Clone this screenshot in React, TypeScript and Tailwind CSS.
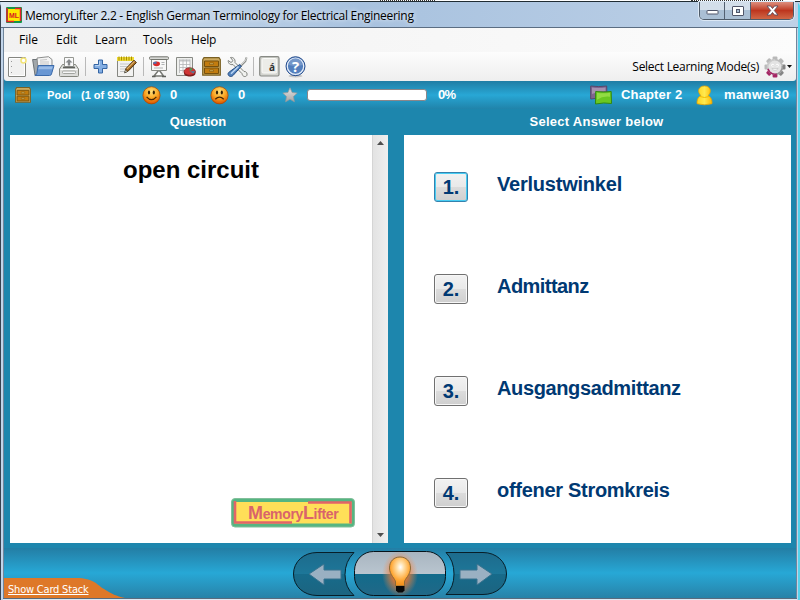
import React from "react";

const UI = "font-['Open_Sans','Noto_Sans',sans-serif]";
const ARIAL = "font-['Liberation_Sans',Arial,sans-serif]";

function Logo() {
  return (
    <svg width="16" height="16" viewBox="0 0 16 16">
      <rect width="16" height="16" rx="1" fill="#159447" />
      <path d="M2 2h12v12H2z" fill="#ffe800" />
      <path d="M1 1v13.500H8M9 1.500h5.500V14" fill="none" stroke="#e5202c" strokeWidth="1.500" />
      <text x="3" y="10.500" fontSize="7.500" fontWeight="bold" textLength="10" lengthAdjust="spacingAndGlyphs" fill="#d71920" fontFamily="Liberation Sans, sans-serif">ML</text>
    </svg>
  );
}

function NewIcon() {
  return (
    <svg width="20" height="22" viewBox="0 0 20 22">
      <rect x="1.500" y="1.500" width="17" height="19" rx=".5" fill="#f1f1f0" stroke="#858681" />
      <path d="M2.500 2.500h15v17h-15z" fill="none" stroke="#fff" />
      <path d="M4.500 5v1M4.500 10v1M4.500 16v1" stroke="#999" />
      <circle cx="16.500" cy="4.500" r="2.500" fill="#fff" stroke="#f3e477" strokeWidth="1.600" />
    </svg>
  );
}

function FolderIcon() {
  return (
    <svg width="23" height="22" viewBox="0 0 23 22">
      <path d="M.6 3.500h5.500l1 1.500h11v12L3 19z" fill="#a1a7ab" stroke="#6d7377" />
      <path d="M5 2l11.500-1.300L20 3.500V14H6z" fill="#f4f4f4" stroke="#8b8d8c" />
      <path d="M8 4.200l7-.7M8 6h9M8 8h9" stroke="#c6c6c6" />
      <path d="M6.200 9.500H22L19.500 18q-.4 1.500-2 1.500H2.800q1.700-.4 2-2z" fill="#6997d3" stroke="#3c6bab" />
      <path d="M7 10.500h13.800l-.8 2.800H6.200z" fill="#9abce7" />
    </svg>
  );
}

function PrinterIcon() {
  return (
    <svg width="22" height="22" viewBox="0 0 22 22">
      <path d="M4.500 8.500h13l3 4.500v6.500q0 1-1 1h-17q-1 0-1-1V13z" fill="#dcddda" stroke="#85877f" />
      <path d="M2.500 13.500h17" stroke="#fff" />
      <path d="M6.500 1.500h9v9h-9z" fill="#fafafa" stroke="#969893" />
      <path d="M11 3l3.500 3.500h-2.300v3H9.800v-3H7.500z" fill="#85888a" />
      <path d="M5 11.500h12" stroke="#5f615d" strokeWidth="1.600" />
      <rect x="4.500" y="15" width="13" height="2.500" rx="1" fill="#f6f6f6" stroke="#a3a5a0" />
    </svg>
  );
}

function PlusIcon() {
  return (
    <svg width="15" height="15" viewBox="0 0 15 15">
      <path d="M5.500 1h4v4.500H14v4H9.500V14h-4V9.500H1v-4h4.500z" fill="#83aee3" stroke="#3465a4" />
      <path d="M6.500 2.200v4.300H2.200" fill="none" stroke="#b6d2f1" />
    </svg>
  );
}

function NotepadIcon() {
  return (
    <svg width="22" height="22" viewBox="0 0 22 22">
      <path d="M1.500 3.500h16v17h-16z" fill="#f2f2f1" stroke="#858681" />
      <path d="M4 8h11M4 10.500h11M4 13h9M4 15.500h6" stroke="#c6c8ca" />
      <path d="M1 3h17" stroke="#eedb35" strokeWidth="4" />
      <path d="M3 .5v4M5.500.5v4M8 .5v4M10.500.5v4M13 .5v4M15.500.5v4" stroke="#aa8e00" />
      <path d="M9 16.500l1-4 8-8.300 2.400 2.400-8 8.300z" fill="#a4681e" stroke="#4b3312" />
      <path d="M11 12.800l7.500-7.500" stroke="#e4b369" strokeWidth="1.200" />
      <path d="M8.500 17l1-3.500 2 2z" fill="#eadcb8" stroke="#333" strokeWidth=".6" />
    </svg>
  );
}

function PresentationIcon() {
  return (
    <svg width="21" height="22" viewBox="0 0 21 22">
      <path d="M9.500 14.500L5 20h9.500L10.500 14.500" fill="#fff" stroke="#777974" strokeWidth="1.500" />
      <path d="M3 20.500h3.500M13 20.500h4" stroke="#5d5f5b" strokeWidth="1.500" />
      <path d="M2.500 3h15v11.500h-15z" fill="#f8f8f7" stroke="#888a85" />
      <rect x=".5" y=".8" width="19" height="2.700" rx="1" fill="#d7d8d5" stroke="#74766f" />
      <ellipse cx="7.500" cy="7.800" rx="3.500" ry="2.400" fill="#d92929" />
      <path d="M7.500 7.800V5.400A3.500 2.400 0 004 7.800z" fill="#4a75b4" />
      <path d="M12.500 6.500h3M12.500 8.500h3M5 12h9" stroke="#b1b3b4" />
    </svg>
  );
}

function TableIcon() {
  return (
    <svg width="21" height="22" viewBox="0 0 21 22">
      <path d="M1.500 1.500h16v18h-16z" fill="#eeefed" stroke="#888a85" />
      <path d="M4.500 4h10.500v13H4.500z" fill="#fafafa" />
      <path d="M4.500 3.500H15v2H4.500z" fill="#c3c5c6" />
      <path d="M4.500 8.500H15M4.500 11.500H15M4.500 14.500H15M4.500 3.500v13.500M8 3.500v13.500M11.500 3.500v13.500M15 3.500v13.500" stroke="#b2b4b5" strokeWidth=".8" />
      <path d="M9 15.500v1.700c0 4.300 11.500 4.300 11.500 0v-1.700" fill="#791b1b" />
      <ellipse cx="14.700" cy="15.500" rx="5.700" ry="3.700" fill="#cf3535" stroke="#871f1f" strokeWidth=".7" />
      <path d="M14.700 15.500v-3.400l3.500.7z" fill="#4b9b55" />
      <path d="M14.700 15.500l5.300-.5-1.500 2.500z" fill="#527c9d" />
    </svg>
  );
}

function DrawerIcon({ size = 19 }: { size?: number }) {
  return (
    <svg width={size} height={size} viewBox="0 0 19 19">
      <path d="M2 .7h15l1.300 2v15.500H.7V2.700z" fill="#cdaa5f" stroke="#796023" strokeWidth="1.200" />
      <path d="M2.500 4h14v5.500h-14zM2.500 11h14v5.500h-14z" fill="#c27c0f" stroke="#76510d" />
      <path d="M7.500 6h4v1.300h-4zM7.500 13h4v1.300h-4z" fill="#e8c567" stroke="#765010" strokeWidth=".6" />
    </svg>
  );
}

function ToolsIcon() {
  return (
    <svg width="21" height="22" viewBox="0 0 21 22">
      <path d="M3.500 1.500c2.500-.5 5 1.300 4.500 5L17 15.500c2.300-.3 3.800 2 2.800 4-1 1.800-4.500 1.300-4.700-1.800L6 8.500c-2.700.7-5-1-4.800-4L4 6.500l2-1.800z" fill="#f1f2f0" stroke="#80827d" />
      <path d="M19.500 1.500l-1.200 3.700-5 5" fill="none" stroke="#8d8f8b" strokeWidth="2" />
      <path d="M19.500 2l-1.500 3-4.500 4.500" fill="none" stroke="#e5e5e3" strokeWidth=".8" />
      <path d="M12.700 8.500l1.700 1.700-8.300 9.200c-1.600 1.800-4.500 1.200-5-.9-.3-1.100.4-2 1.500-2.800z" fill="#5282bd" stroke="#244c82" />
      <path d="M11.500 10.500L4 17.700" stroke="#bdd7f4" strokeWidth="1.500" />
    </svg>
  );
}

function AccentIcon() {
  return (
    <svg width="21" height="21" viewBox="0 0 21 21">
      <rect x=".7" y=".7" width="19.300" height="19.300" rx="1.500" fill="#d3d4cf" stroke="#888a85" strokeWidth="1.200" />
      <rect x="3" y="2.500" width="14.700" height="14.500" rx="1.200" fill="#ecece8" stroke="#fafaf8" />
      <text x="10" y="14.500" fontSize="10" fontWeight="bold" fill="#333" fontFamily="Open Sans, sans-serif">á</text>
    </svg>
  );
}

function HelpIcon() {
  return (
    <svg width="21" height="22" viewBox="0 0 21 22">
      <ellipse cx="10.500" cy="20" rx="7" ry="1.500" fill="#aaa" opacity=".6" />
      <circle cx="10.500" cy="10.200" r="9.500" fill="#537fbd" stroke="#294f8e" strokeWidth="1" />
      <circle cx="10.500" cy="10.200" r="8.200" fill="none" stroke="#e9f0fa" strokeWidth="1.200" />
      <path d="M3.700 9a6.800 6.800 0 0113.600 0q-6 2-13.600 0" fill="#91acd3" opacity=".55" />
      <text x="10.500" y="15.700" textAnchor="middle" fontSize="15" fontWeight="bold" fill="#fff" fontFamily="Open Sans, sans-serif">?</text>
    </svg>
  );
}

function GearIcon() {
  return (
    <svg width="22" height="22" viewBox="-11 -11 22 22">
      {[0, 45, 90, 135, 180, 225, 270, 315].map((a) => (
        <rect key={a} x="-2.400" y="-10.500" width="4.800" height="6" rx="1" transform={`rotate(${a})`}
          fill={a === 180 || a === 225 ? "#a52765" : a === 90 || a === 135 ? "#858585" : "#b9b9b9"} />
      ))}
      <circle r="8" fill="#bcbcbc" />
      <path d="M-8 0A8 8 0 002 7.700V0z" fill="#a52765" />
      <path d="M2 7.700A8 8 0 008-1H0z" fill="#9a9a9a" />
      <path d="M-8 2A8 8 0 010-8V0z" fill="#cacaca" />
      <circle r="6.500" fill="#e3e3e3" />
      <circle cx="-2.300" cy="-1.800" r="1.400" fill="#fff" />
      <circle cx="2.300" cy="-1.800" r="1.400" fill="#fff" />
      <circle cx="-2" cy="-1.700" r=".5" fill="#aaa" />
      <circle cx="2" cy="-1.700" r=".5" fill="#aaa" />
      <path d="M-3.200 1.500Q0 5 3.200 1.500z" fill="#fff" stroke="#b5b5b5" strokeWidth=".5" />
    </svg>
  );
}

function Face({ sad = false }: { sad?: boolean }) {
  return (
    <svg width="19" height="19" viewBox="0 0 19 19">
      <defs>
        <radialGradient id="faceFill" cx=".5" cy=".28" r=".7">
          <stop offset="0" stopColor="#ffe07a" /><stop offset=".55" stopColor="#fba622" /><stop offset="1" stopColor="#db5600" />
        </radialGradient>
      </defs>
      <circle cx="9.500" cy="9.300" r="8.600" fill="url(#faceFill)" stroke="#a84900" strokeWidth=".7" />
      <ellipse cx="7" cy="6.500" rx="1.100" ry="2.100" fill="#342005" />
      <ellipse cx="11.800" cy="6.500" rx="1.100" ry="2.100" fill="#342005" />
      <path d={sad ? "M5.300 13.300Q9.500 9 13.700 13.300" : "M4.600 10.800Q9.500 16.500 14.400 10.800"} fill="none" stroke="#4c2703" strokeWidth="1.300" />
    </svg>
  );
}

function StarIcon() {
  return (
    <svg width="16" height="16" viewBox="0 0 16 16">
      <defs><linearGradient id="starFill" x2="0" y2="1"><stop stopColor="#e5e5e5" /><stop offset="1" stopColor="#a5a5a5" /></linearGradient></defs>
      <path d="M8 .8l2.100 4.700 5.100.6-3.800 3.500 1 5.200L8 12.200l-4.400 2.600 1-5.200L.8 6.100l5.100-.6z" fill="url(#starFill)" stroke="#999" strokeWidth=".7" />
    </svg>
  );
}

function CardsIcon() {
  return (
    <svg width="22" height="20" viewBox="0 0 22 20">
      <path d="M.7 1q8 1.200 16 0l.3 12.500Q9 12.300.7 14z" fill="#806590" stroke="#5b4669" />
      <path d="M2 2.500q6.500 1 13.500 0v3.500q-5-.5-13.500 3z" fill="#a591b0" />
      <path d="M5.700 6.500q7.500 1 15.500 0l.3 12Q14 17.200 5.500 19z" fill="#6ac821" stroke="#318812" />
      <path d="M7 7.800q6 1 13 0v4q-7-1-13 3z" fill="#92dc43" />
    </svg>
  );
}

function UserIcon() {
  return (
    <svg width="17" height="21" viewBox="0 0 17 21">
      <defs><linearGradient id="userFill"><stop stopColor="#ffd51c" /><stop offset=".5" stopColor="#ffe94f" /><stop offset="1" stopColor="#ffb900" /></linearGradient></defs>
      <path d="M4.800 10.500C.8 6.500 2.500 1 8.500 1s7.700 5.500 3.700 9.500c3 1.800 4 4.600 3.800 8.200Q8.500 21 1 18.700c-.2-3.600.8-6.400 3.800-8.200z" fill="url(#userFill)" stroke="#e8a300" strokeWidth=".8" />
      <path d="M4 11.500q4.500 2 9 0" fill="none" stroke="#f2ba00" />
    </svg>
  );
}

function WindowButtons() {
  return (
    <div className="flex h-[18px] w-[95px] overflow-hidden rounded-b-[5px] border border-t-0 border-[#4e5b69] bg-[#b9cadc] shadow-[0_0_0_1px_#dce8f5]">
      <div className="flex w-[25px] items-center justify-center border-r border-[#536071] bg-linear-to-b from-[#d3deea] from-50% to-[#aabfd4] to-50%">
        <svg width="13" height="9"><rect x="1" y="4.500" width="11" height="3.500" rx=".5" fill="#fff" stroke="#50566a" /></svg>
      </div>
      <div className="flex w-[26px] items-center justify-center border-r border-[#536071] bg-linear-to-b from-[#d3deea] from-50% to-[#aabfd4] to-50%">
        <svg width="12" height="10"><rect x=".5" y=".5" width="11" height="9" rx=".5" fill="#fff" stroke="#50566a" /><rect x="4.500" y="3.500" width="3" height="3" fill="#a8bed4" stroke="#50566a" /></svg>
      </div>
      <div className="flex flex-1 items-center justify-center bg-linear-to-b from-[#dc8e7e] via-[#bd351e] via-50% to-[#d06645]">
        <svg width="13" height="11" viewBox="0 0 13 11"><path d="M1 1h3.500l2 2.500 2-2.500H12L8.300 5.500 12 10H8.500l-2-2.500-2 2.500H1l3.700-4.500z" fill="#fff" stroke="#5a4b5a" strokeWidth=".9" /></svg>
      </div>
    </div>
  );
}

function TitleBar() {
  return (
    <header className="flex h-[26px] shrink-0 items-start border-b border-[#5b6d82] bg-linear-to-r from-[#dbe7f3] via-[#a8c2df] via-45% to-[#bed1e7]">
      <div className="mt-[5px] ml-[5px]"><Logo /></div>
      <h1 className={`${UI} mt-[5px] ml-[3px] h-[18px] w-[394px] text-[12px] leading-[18px] tracking-[-0.28px] whitespace-nowrap text-black [text-shadow:0_0_5px_#fff]`}>
        MemoryLifter 2.2 - English German Terminology for Electrical Engineering
      </h1>
      <div className="mr-[4px] ml-auto"><WindowButtons /></div>
    </header>
  );
}

const Sep = ({ className }: { className: string }) => <div className={`${className} h-[19px] w-px bg-[#b9b9b9]`} />;

function Toolbar() {
  return (
    <div className="flex h-[29px] shrink-0 items-center rounded-b-[3px] bg-linear-to-b from-[#fdfdfd] to-[#eeeeee]">
      <div className="ml-[3px]"><NewIcon /></div>
      <div className="ml-[5px]"><FolderIcon /></div>
      <div className="ml-[3px]"><PrinterIcon /></div>
      <Sep className="ml-[5px]" />
      <div className="ml-[7px]"><PlusIcon /></div>
      <div className="ml-[8px]"><NotepadIcon /></div>
      <Sep className="ml-[5px]" />
      <div className="ml-[5px]"><PresentationIcon /></div>
      <div className="ml-[5px]"><TableIcon /></div>
      <div className="ml-[6px]"><DrawerIcon /></div>
      <div className="ml-[6px]"><ToolsIcon /></div>
      <Sep className="ml-[5px]" />
      <div className="ml-[5px]"><AccentIcon /></div>
      <div className="ml-[5px]"><HelpIcon /></div>
      <div className={`${UI} ml-auto text-[12px] leading-[18px] tracking-[-0.28px] whitespace-nowrap text-black`}>Select Learning Mode(s)</div>
      <div className="ml-[5px]"><GearIcon /></div>
      <svg className="mr-[4px] ml-px" width="5" height="3"><path d="M0 0h5L2.500 3z" fill="#111" /></svg>
    </div>
  );
}

function StatusBar() {
  return (
    <div className={`${ARIAL} flex h-7 shrink-0 items-center bg-linear-to-b from-[#207da4] via-[#28a7d5] via-50% to-[#2083aa] font-bold whitespace-nowrap text-white`}>
      <div className="ml-[11px]"><DrawerIcon size={16} /></div>
      <span className="ml-[16px] w-[34px] text-[11px] tracking-[0.1px]">Pool</span>
      <span className="w-[61px] text-[11px]">(1 of 930)</span>
      <Face />
      <span className="ml-[9px] w-[40px] text-[13px]">0</span>
      <Face sad />
      <span className="ml-[9px] w-[44px] text-[13px]">0</span>
      <StarIcon />
      <div className="ml-[9px] h-[12px] w-[120px] rounded-[3px] border border-[#8b8689] bg-white" />
      <span className="ml-[11px] text-[13px] tracking-[-0.7px]">0%</span>
      <div className="ml-auto"><CardsIcon /></div>
      <span className="ml-[9px] w-[75px] text-[13px] tracking-[0.15px]">Chapter 2</span>
      <UserIcon />
      <span className="ml-[11px] w-[72px] text-[13px] tracking-[0.4px]">manwei30</span>
    </div>
  );
}

function Brand() {
  return (
    <div className={`${ARIAL} relative mt-auto mr-[17px] mb-[15px] h-[30px] w-[124px] self-end`}>
      <svg className="absolute inset-0" width="124" height="30" viewBox="0 0 124 30">
        <rect x=".5" y=".5" width="123" height="28.500" rx="3.500" fill="#55b582" stroke="#82bf9a" />
        <rect x="3.500" y="4" width="117" height="21.500" fill="#ffdf58" />
        <path d="M4 3v21.500h57M77 4.500h42.500v21" fill="none" stroke="#e26468" strokeWidth="2.600" />
      </svg>
      <span className="relative ml-[17px] block text-[14px] leading-[30px] font-bold tracking-[-0.35px] whitespace-nowrap text-[#d9646b]">
        <span className="text-[18px]">M</span>emory<span className="text-[18px]">L</span>ifter
      </span>
    </div>
  );
}

function QuestionPanel() {
  return (
    <section className="flex h-[408px] w-[378px] bg-white">
      <div className="flex flex-1 flex-col">
        <p className={`${ARIAL} mt-[20px] text-center text-[24px] leading-[30px] font-bold text-black`}>open circuit</p>
        <Brand />
      </div>
      <div className="flex w-[16px] flex-col items-center justify-between border-l border-[#d5d5d5] bg-linear-to-r from-[#e3e3e3] to-[#efefef] py-[6px]">
        <svg width="7" height="4"><path d="M0 4h7L3.500 0z" fill="#4e4e4e" /></svg>
        <svg width="7" height="4"><path d="M0 0h7L3.500 4z" fill="#4e4e4e" /></svg>
      </div>
    </section>
  );
}

const ANSWERS = [
  { text: "Verlustwinkel", tracking: "tracking-[-0.22px]" },
  { text: "Admittanz", tracking: "tracking-[-0.55px]" },
  { text: "Ausgangsadmittanz", tracking: "tracking-[-0.37px]" },
  { text: "offener Stromkreis", tracking: "tracking-[-0.29px]" },
];

function AnswerPanel() {
  return (
    <section className={`${ARIAL} h-[408px] w-[387px] bg-white font-bold text-[#003973]`}>
      {ANSWERS.map(({ text, tracking }, i) => (
        <div key={text} className="flex h-[102px] items-start pl-[30px]">
          <button className={`mt-[37px] flex h-[30px] w-[34px] items-center justify-center rounded-[3px] border bg-[linear-gradient(#f2f2f2,#e9e9e9_49%,#dcdcdc_50%,#cfcfcf)] text-[20px] leading-[28px] ${i === 0 ? "border-[#3482ae] shadow-[inset_0_0_0_1px_#48cdf3]" : "border-[#707070] shadow-[inset_0_0_0_1px_#f7f7f7]"}`}>
            {i + 1}.
          </button>
          <span className={`${tracking} mt-[37px] ml-[29px] text-[20px] leading-6 whitespace-nowrap`}>{text}</span>
        </div>
      ))}
    </section>
  );
}

function Navigation() {
  return (
    <svg width="216" height="48" viewBox="292 550 216 48">
      <defs>
        <linearGradient id="sideFill" x2="0" y2="1"><stop stopColor="#1d6b8c" /><stop offset=".5" stopColor="#1d7799" /><stop offset=".51" stopColor="#176b8b" /><stop offset="1" stopColor="#1c6480" /></linearGradient>
        <linearGradient id="midFill" x2="0" y2="1"><stop stopColor="#a8b5c0" /><stop offset=".51" stopColor="#b9c5cf" /><stop offset=".52" stopColor="#126b8b" /><stop offset="1" stopColor="#216887" /></linearGradient>
        <radialGradient id="glow"><stop offset=".35" stopColor="#ff7620" stopOpacity=".9" /><stop offset="1" stopColor="#f58b4d" stopOpacity="0" /></radialGradient>
        <radialGradient id="bulb" cx=".52" cy=".35" r=".6"><stop stopColor="#fff" /><stop offset=".3" stopColor="#ffdda3" /><stop offset=".75" stopColor="#ffa735" /><stop offset="1" stopColor="#f4921d" /></radialGradient>
      </defs>
      <path d="M354 552.500h-37c-13 0-23.500 9-23.500 21.500s10.500 21.500 23.500 21.500h37q-9-8-9-21t9-22z" fill="url(#sideFill)" stroke="#071e28" />
      <path d="M446 552.500h37c13 0 23.500 9 23.500 21.500s-10.500 20.500-23.500 20.500h-37q8-7 8-20.500t-8-21.500z" fill="url(#sideFill)" stroke="#071e28" />
      <rect x="354.500" y="551.500" width="91" height="44" rx="19" fill="url(#midFill)" stroke="#06131a" />
      <path d="M309 574l15-10v6h17v9h-17v6z" fill="#9ab0c2" stroke="#38738f" />
      <path d="M492 574l-15-10v6h-17v9h17v6z" fill="#9ab0c2" stroke="#38738f" />
      <ellipse cx="400" cy="574" rx="18" ry="23" fill="url(#glow)" />
      <path d="M395.500 586v-4c0-3-6-7-6-14 0-7 4.500-11 10.500-11s10.500 4 10.500 11c0 7-6 11-6 14v4z" fill="url(#bulb)" stroke="#8a6a39" />
      <path d="M396 586h8.500v4.500l-2 2h-4.500l-2-2z" fill="#080808" />
    </svg>
  );
}

function Footer() {
  return (
    <footer className="relative flex h-[50px] shrink-0 justify-center bg-linear-to-b from-[#237ea5] via-[#27a8d6] to-[#2782a8] pt-[2px]">
      <div className="absolute bottom-0 left-0">
        <svg className="block" width="121" height="20"><path d="M0 0h72c18 0 21 7 28 11 8 5 12 7 21 9H0z" fill="#de7828" /></svg>
        <a className="absolute top-[4px] left-[4px] font-['DejaVu_Sans_Condensed','DejaVu_Sans',sans-serif] text-[11px] leading-[16px] tracking-[-0.2px] whitespace-nowrap text-white underline underline-offset-1">Show Card Stack</a>
      </div>
      <Navigation />
    </footer>
  );
}

export default function App() {
  return (
    <div className="flex h-[600px] w-[800px] flex-col overflow-hidden bg-[#c2d5ea]">
      <div className="flex h-[2px] shrink-0 justify-end border-b border-[#202c33] bg-white">
        <span className="mr-[256px] w-[55px] border-t border-dotted border-[#333]" />
        <span className="mr-[17px] w-[92px] border-t border-dotted border-[#333]" />
      </div>
      <div className="flex min-h-0 flex-1 flex-col rounded-t-[5px] border-r-2 border-l border-r-[#55d3ec] border-l-[#37424f]">
        <TitleBar />
        <div className="mr-px ml-[2px] flex flex-col border-r border-l border-[#70859b] bg-[#1d86ad]">
          <nav className={`${UI} flex h-6 shrink-0 items-center bg-linear-to-r from-[#f1f1f1] to-[#fcfcfc] text-[12px] whitespace-nowrap text-black`}>
            <span className="ml-[15px] w-[37px]">File</span>
            <span className="w-[39px]">Edit</span>
            <span className="w-[48px]">Learn</span>
            <span className="w-[48px]">Tools</span>
            <span className="tracking-[-0.2px]">Help</span>
          </nav>
          <Toolbar />
          <StatusBar />
          <div className={`${ARIAL} flex h-[26px] items-center text-[13px] font-bold text-white`}>
            <h2 className="ml-[6px] w-[376px] text-center">Question</h2>
            <h2 className="ml-[17px] w-[387px] text-center tracking-[0.27px]">Select Answer below</h2>
          </div>
          <main className="flex gap-4 pb-[5px] pl-[6px]">
            <QuestionPanel />
            <AnswerPanel />
          </main>
          <Footer />
        </div>
        <div className="mr-px ml-[2px] h-[2px] border-t border-[#596b7d] bg-[#dce9f4]" />
      </div>
    </div>
  );
}
